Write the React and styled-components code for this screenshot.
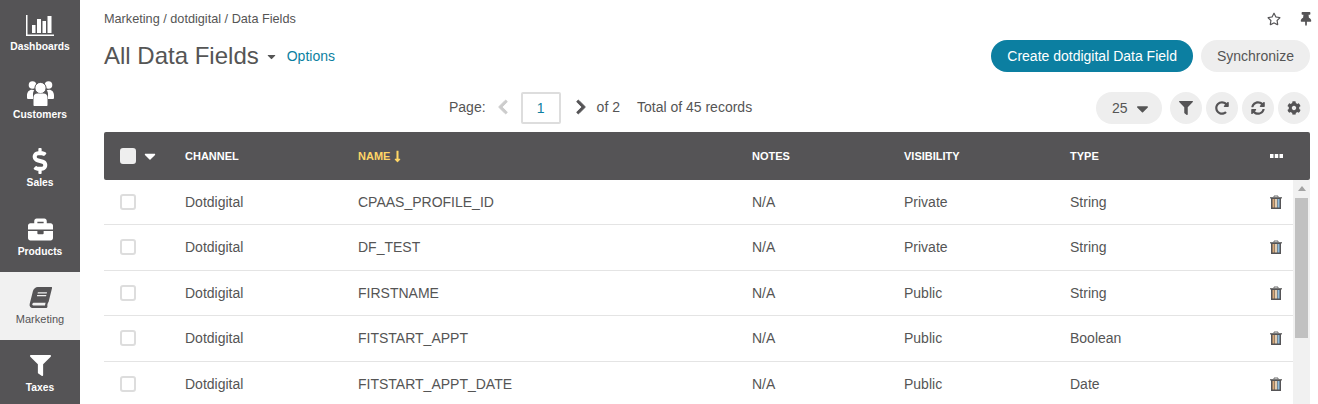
import styled, { createGlobalStyle } from "styled-components";
import {
  FaBook,
  FaBriefcase,
  FaCaretDown,
  FaChevronLeft,
  FaChevronRight,
  FaCog,
  FaDollarSign,
  FaFilter,
  FaLongArrowAltDown,
  FaRedoAlt,
  FaRegStar,
  FaSyncAlt,
  FaThumbtack,
} from "react-icons/fa";

const Global = createGlobalStyle`
  html, body { margin: 0; padding: 0; background: #fff; overflow: hidden; }
  body { font-family: "Liberation Sans", Arial, sans-serif; color: #555; }
`;

const Page = styled.div`
  display: flex;
  width: 1318px;
  height: 404px;
  overflow: hidden;
`;

const Sidebar = styled.nav`
  width: 80px;
  flex: none;
  margin-top: -1px;
  background: #555456;
`;

const NavItem = styled.div`
  height: 68.2px;
  box-sizing: border-box;
  padding-top: 13px;
  display: flex;
  flex-direction: column;
  align-items: center;
  gap: ${(p) => (p.$active ? 2 : 3)}px;
  font-size: ${(p) => (p.$active ? 11 : 10.3)}px;
  font-weight: ${(p) => (p.$active ? 400 : 700)};
  color: ${(p) => (p.$active ? "#555456" : "#fff")};
  background: ${(p) => (p.$active ? "#f1f1f1" : "transparent")};
`;

const NavIcon = styled.span`
  height: 26px;
  display: flex;
  align-items: center;
  font-size: ${(p) => p.$size || 26}px;
`;

const Main = styled.main`
  flex: 1;
  min-width: 0;
  padding: 0 8px 0 24px;
`;

const TopRow = styled.div`
  height: 40px;
  box-sizing: border-box;
  padding-top: 11px;
  display: flex;
  justify-content: space-between;
`;

const Crumbs = styled.div`
  font-size: 12.7px;
  line-height: 15px;
  padding-top: 1px;
`;

const TopIcons = styled.div`
  display: flex;
  gap: 18px;
  font-size: 14px;
  padding-top: 1px;
  color: #555456;
  margin-right: -3px;
`;

const TitleRow = styled.div`
  height: 32px;
  display: flex;
  align-items: center;
`;

const Title = styled.h1`
  margin: 0;
  font-size: 24px;
  font-weight: 400;
  line-height: 32px;
`;

const TitleCaret = styled.span`
  display: flex;
  margin-left: 6px;
  font-size: 13px;
`;

const OptionsLink = styled.a`
  margin-left: 9px;
  font-size: 14px;
  color: #0c7fa1;
`;

const Actions = styled.div`
  margin-left: auto;
  display: flex;
  gap: 8px;
`;

const Pill = styled.button`
  height: 32px;
  border: 0;
  border-radius: 16px;
  padding: 0 16px;
  font: 14px "Liberation Sans", Arial, sans-serif;
  color: ${(p) => (p.$primary ? "#fff" : "#555")};
  background: ${(p) => (p.$primary ? "#0c7fa1" : "#eee")};
`;

const ToolRow = styled.div`
  height: 32px;
  margin-top: 20px;
  display: flex;
  align-items: center;
  font-size: 14px;
`;

const Pager = styled.div`
  margin-left: 345px;
  display: flex;
  align-items: center;
  padding-bottom: 2px;
`;

const Chevron = styled.span`
  display: flex;
  font-size: 16px;
  color: ${(p) => (p.$off ? "#ccc" : "#555456")};
  margin: ${(p) => p.$margin};
  svg {
    stroke: currentColor;
    stroke-width: 30;
  }
`;

const PageBox = styled.div`
  width: 40px;
  height: 32px;
  margin-bottom: -2px;
  box-sizing: border-box;
  border: 2px solid #ddd;
  border-radius: 2px;
  display: flex;
  align-items: center;
  justify-content: center;
  color: #0c7fa1;
`;

const Total = styled.span`
  margin-left: 17px;
`;

const ToolButtons = styled.div`
  margin-left: auto;
  display: flex;
  gap: 4px;
`;

const SizeSelect = styled.div`
  width: 66px;
  height: 32px;
  box-sizing: border-box;
  padding-left: 16px;
  margin-right: 4px;
  border-radius: 16px;
  background: #eee;
  display: flex;
  align-items: center;
  gap: 5px;
`;

const RoundButton = styled.div`
  width: 32px;
  height: 32px;
  border-radius: 50%;
  background: #eee;
  color: #555456;
  font-size: 14px;
  display: flex;
  align-items: center;
  justify-content: center;
`;

const columns = "81px 173px 394px 152px 166px 100px 1fr";

const TableHead = styled.div`
  height: 48px;
  margin-top: 8px;
  border-radius: 2px;
  background: #555456;
  color: #fff;
  font-size: 11px;
  font-weight: 700;
  display: grid;
  grid-template-columns: ${columns};
  align-items: center;
`;

const HeadCheck = styled.div`
  display: flex;
  align-items: center;
  gap: 5px;
  padding-left: 16px;
`;

const CheckBox = styled.span`
  display: block;
  width: 16px;
  height: 16px;
  box-sizing: border-box;
  border-radius: 3px;
  border: 2px solid ${(p) => (p.$head ? "#eee" : "#ddd")};
  background: ${(p) => (p.$head ? "#eee" : "#fff")};
`;

const HeadCell = styled.div`
  display: flex;
  align-items: center;
  gap: 1px;
  color: ${(p) => (p.$sorted ? "#ffd666" : "#fff")};
`;

const MoreCell = styled.div`
  display: flex;
  justify-content: flex-end;
  padding-right: 27px;
`;

const Body = styled.div`
  display: flex;
  height: 224px;
  overflow: hidden;
`;

const Rows = styled.div`
  flex: 1;
  min-width: 0;
`;

const Row = styled.div`
  height: 45px;
  box-sizing: border-box;
  border-bottom: 1px solid #e4e4e4;
  display: grid;
  grid-template-columns: ${columns};
  align-items: center;
  font-size: 14px;
  &:nth-child(even) {
    height: 46px;
    padding-bottom: 1px;
  }
`;

const RowCheck = styled.div`
  padding-left: 16px;
`;

const TrashCell = styled.div`
  display: flex;
  justify-content: flex-end;
  padding-right: 11px;
`;

const Scrollbar = styled.div`
  position: relative;
  width: 17px;
  flex: none;
  background: #f1f1f1;
`;

const ScrollArrow = styled.span`
  position: absolute;
  top: 6px;
  left: 5px;
  border: 4px solid transparent;
  border-top: 0;
  border-bottom: 5px solid #a3a3a3;
`;

const ScrollThumb = styled.div`
  position: absolute;
  top: 18px;
  left: 2px;
  width: 13px;
  height: 140px;
  background: #c1c1c1;
`;

function ChartIcon() {
  return (
    <svg width="28" height="21" viewBox="0 0 28 21" fill="currentColor">
      <path d="M0 0h1.500v19.500H28V21H0z" />
      <rect x="6" y="10" width="3.500" height="8" />
      <rect x="11" y="4" width="4" height="14" />
      <rect x="16.500" y="6" width="3.500" height="12" />
      <rect x="21.500" y="1" width="4" height="17" />
    </svg>
  );
}

function CustomersIcon() {
  return (
    <svg width="27" height="25" viewBox="0 0 27 25" fill="currentColor">
      <circle cx="5.500" cy="4" r="3.800" />
      <circle cx="21.500" cy="4" r="3.800" />
      <path d="M0 14.500c0-3.600 2-5.800 5-5.800 1 0 1.700.2 2.300.5-.8 1-1.300 2.400-1.300 3.800V18H1.500C.5 18 0 17.300 0 16.400zM27 14.500c0-3.600-2-5.800-5-5.800-1 0-1.700.2-2.300.5.8 1 1.300 2.400 1.300 3.800V18h4.500c1 0 1.500-.7 1.500-1.600z" />
      <circle cx="13.500" cy="7" r="5.600" stroke="#555456" strokeWidth="1" />
      <path d="M6.500 24v-7.500c0-2.700 1.700-4 3.800-4h6.400c2.100 0 3.800 1.300 3.800 4V24c0 .6-.4 1-1 1h-12c-.6 0-1-.4-1-1z" />
    </svg>
  );
}

function TrashIcon() {
  return (
    <svg width="12" height="14" viewBox="0 0 12 14">
      <path d="M4 2V1h4v1" fill="none" stroke="#6b6b6b" strokeWidth="1" />
      <rect x="0" y="2" width="12" height="1.500" fill="#777" />
      <rect x="1" y="3" width="10" height="11" fill="#555456" />
      <rect x="2.500" y="4" width="2" height="8.500" fill="#d8a878" />
      <rect x="5" y="4" width="2" height="8.500" fill="#e4cdb0" />
      <rect x="7.500" y="4" width="2" height="8.500" fill="#8fbcdc" />
    </svg>
  );
}

function MoreIcon() {
  return (
    <svg width="13" height="4" viewBox="0 0 13 4" fill="currentColor">
      <rect x="0" width="3.500" height="4" />
      <rect x="4.750" width="3.500" height="4" />
      <rect x="9.500" width="3.500" height="4" />
    </svg>
  );
}

const navItems = [
  { label: "Dashboards", icon: <ChartIcon /> },
  { label: "Customers", icon: <CustomersIcon /> },
  { label: "Sales", icon: <FaDollarSign /> },
  { label: "Products", icon: <FaBriefcase />, size: 25 },
  { label: "Marketing", icon: <FaBook style={{ transform: "skewX(-14deg)" }} />, size: 21 },
  { label: "Taxes", icon: <FaFilter />, size: 21 },
];

const records = [
  ["CPAAS_PROFILE_ID", "Private", "String"],
  ["DF_TEST", "Private", "String"],
  ["FIRSTNAME", "Public", "String"],
  ["FITSTART_APPT", "Public", "Boolean"],
  ["FITSTART_APPT_DATE", "Public", "Date"],
];

export default function App() {
  return (
    <Page>
      <Global />
      <Sidebar>
        {navItems.map((item) => (
          <NavItem key={item.label} $active={item.label === "Marketing"}>
            <NavIcon $size={item.size}>{item.icon}</NavIcon>
            {item.label}
          </NavItem>
        ))}
      </Sidebar>
      <Main>
        <TopRow>
          <Crumbs>Marketing / dotdigital / Data Fields</Crumbs>
          <TopIcons>
            <FaRegStar />
            <FaThumbtack />
          </TopIcons>
        </TopRow>
        <TitleRow>
          <Title>All Data Fields</Title>
          <TitleCaret>
            <FaCaretDown />
          </TitleCaret>
          <OptionsLink>Options</OptionsLink>
          <Actions>
            <Pill $primary>Create dotdigital Data Field</Pill>
            <Pill>Synchronize</Pill>
          </Actions>
        </TitleRow>
        <ToolRow>
          <Pager>
            Page:
            <Chevron $off $margin="0 10px 0 9px">
              <FaChevronLeft />
            </Chevron>
            <PageBox>1</PageBox>
            <Chevron $margin="0 8px 0 12px">
              <FaChevronRight />
            </Chevron>
            of 2
            <Total>Total of 45 records</Total>
          </Pager>
          <ToolButtons>
            <SizeSelect>
              25 <FaCaretDown size={19} />
            </SizeSelect>
            <RoundButton>
              <FaFilter />
            </RoundButton>
            <RoundButton>
              <FaRedoAlt />
            </RoundButton>
            <RoundButton>
              <FaSyncAlt />
            </RoundButton>
            <RoundButton>
              <FaCog />
            </RoundButton>
          </ToolButtons>
        </ToolRow>
        <TableHead>
          <HeadCheck>
            <CheckBox $head />
            <FaCaretDown size={18} />
          </HeadCheck>
          <HeadCell>CHANNEL</HeadCell>
          <HeadCell $sorted>
            NAME <FaLongArrowAltDown size={13} />
          </HeadCell>
          <HeadCell>NOTES</HeadCell>
          <HeadCell>VISIBILITY</HeadCell>
          <HeadCell>TYPE</HeadCell>
          <MoreCell>
            <MoreIcon />
          </MoreCell>
        </TableHead>
        <Body>
          <Rows>
            {records.map(([name, visibility, type]) => (
              <Row key={name}>
                <RowCheck>
                  <CheckBox />
                </RowCheck>
                <div>Dotdigital</div>
                <div>{name}</div>
                <div>N/A</div>
                <div>{visibility}</div>
                <div>{type}</div>
                <TrashCell>
                  <TrashIcon />
                </TrashCell>
              </Row>
            ))}
          </Rows>
          <Scrollbar>
            <ScrollArrow />
            <ScrollThumb />
          </Scrollbar>
        </Body>
      </Main>
    </Page>
  );
}
